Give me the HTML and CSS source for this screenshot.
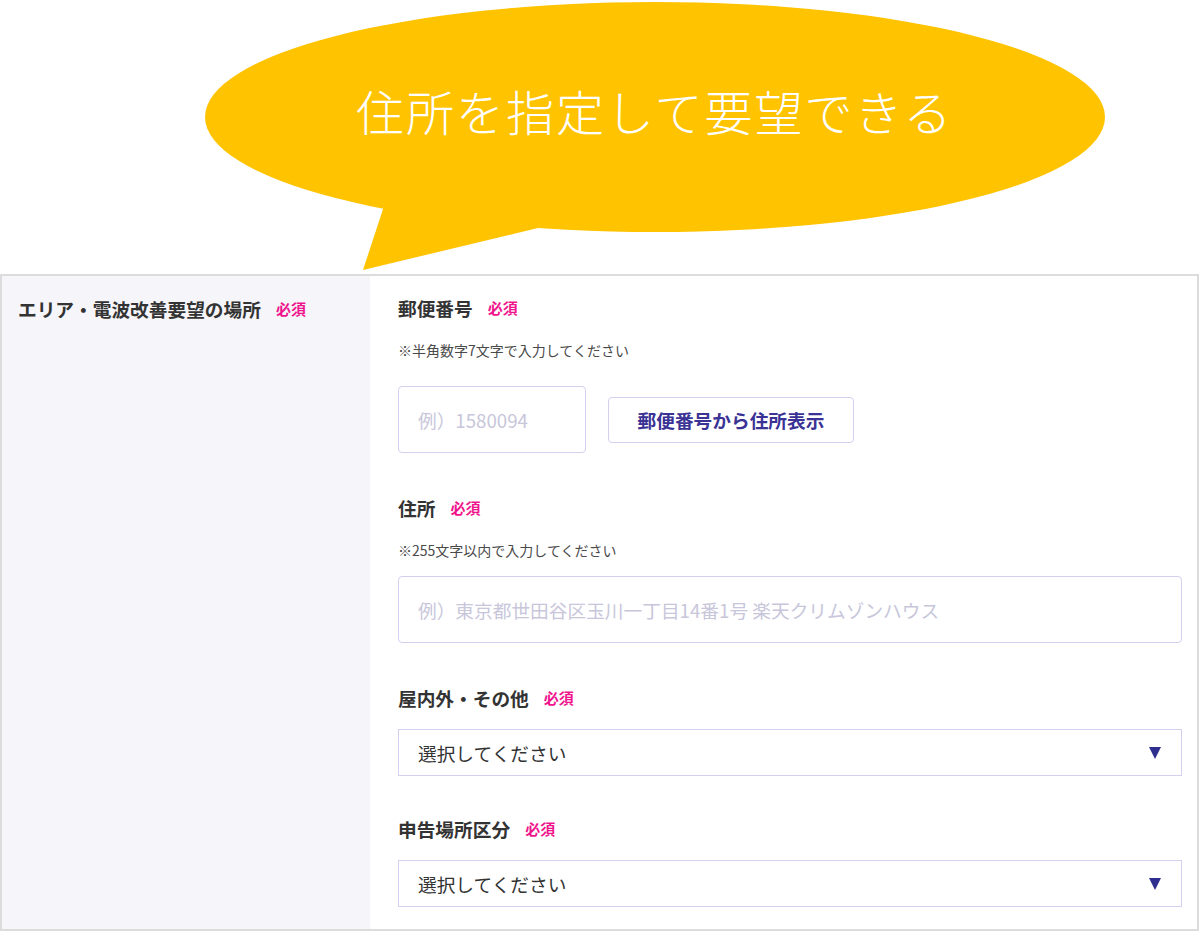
FILE: index.html
```html
<!DOCTYPE html>
<html lang="ja">
<head>
<meta charset="utf-8">
<title>エリア・電波改善要望の場所</title>
<link rel="stylesheet" href="styles.css">
</head>
<body>
<div class="callout">
  <svg class="bubble" width="1199" height="274" viewBox="0 0 1199 274">
    <ellipse cx="655" cy="117" rx="450" ry="115" fill="#FFC300"/>
    <polygon points="386,200 363,270 538,228 540,200" fill="#FFC300"/>
    <text x="356" y="131" class="bubble-text">住所を指定して要望できる</text>
  </svg>
</div>
<div class="form">
  <div class="side">
    <div class="side-label">エリア・電波改善要望の場所<span class="req">必須</span></div>
  </div>
  <div class="main">
    <div class="field">
      <div class="label">郵便番号<span class="req">必須</span></div>
      <div class="hint">※半角数字7文字で入力してください</div>
      <div class="zip-row">
        <div class="input zip">例）1580094</div>
        <div class="btn">郵便番号から住所表示</div>
      </div>
    </div>
    <div class="field">
      <div class="label">住所<span class="req">必須</span></div>
      <div class="hint">※255文字以内で入力してください</div>
      <div class="input addr">例）東京都世田谷区玉川一丁目14番1号 楽天クリムゾンハウス</div>
    </div>
    <div class="field">
      <div class="label">屋内外・その他<span class="req">必須</span></div>
      <div class="select"><span>選択してください</span><span class="arrow"></span></div>
    </div>
    <div class="field field-tight">
      <div class="label">申告場所区分<span class="req">必須</span></div>
      <div class="select"><span>選択してください</span><span class="arrow"></span></div>
    </div>
  </div>
</div>
</body>
</html>
```

FILE: styles.css
```css
html, body {
  margin: 0;
  padding: 0;
  background: #ffffff;
}

body {
  font-family: "Noto Sans CJK JP", "Noto Sans", sans-serif;
  color: #333333;
  width: 1199px;
}

.callout {
  height: 274px;
}

.bubble {
  display: block;
}

.bubble-text {
  font-family: "Noto Sans CJK JP", sans-serif;
  font-weight: 300;
  font-size: 48px;
  letter-spacing: 2px;
  fill: #ffffff;
}

.form {
  display: flex;
  border: 2px solid #dcdcdc;
  box-sizing: border-box;
  width: 1199px;
}

.side {
  width: 368px;
  flex: none;
  background: #f5f5fa;
  padding: 21px 16px;
  box-sizing: border-box;
}

.side-label {
  font-weight: 700;
  font-size: 18.7px;
  line-height: 24px;
  display: flex;
  align-items: center;
}

.req {
  color: #f0148c;
  font-weight: 700;
  font-size: 15px;
  margin-left: 15px;
}

.main {
  flex: 1;
  padding: 20px 15px 22px 28px;
}

.field + .field {
  margin-top: 43px;
}

.field + .field-tight {
  margin-top: 41px;
}

.label {
  font-weight: 700;
  font-size: 18.7px;
  line-height: 24px;
  display: flex;
  align-items: center;
}

.hint {
  font-size: 14px;
  line-height: 20px;
  margin-top: 20px;
  color: #4a4a4a;
}

.zip-row {
  display: flex;
  align-items: center;
  gap: 22px;
  margin-top: 26px;
}

.input {
  border: 1.5px solid #d3d0f0;
  border-radius: 4px;
  height: 67px;
  box-sizing: border-box;
  padding-left: 19px;
  display: flex;
  align-items: center;
  font-size: 18.7px;
  color: #c8c6da;
}

.zip {
  width: 188px;
}

.addr {
  margin-top: 16px;
}

.btn {
  width: 246px;
  height: 46px;
  box-sizing: border-box;
  border: 1.5px solid #d3d0f0;
  border-radius: 4px;
  background: #ffffff;
  color: #3a3294;
  font-weight: 700;
  font-size: 18.7px;
  display: flex;
  align-items: center;
  justify-content: center;
}

.select {
  margin-top: 19px;
  height: 47px;
  box-sizing: border-box;
  border: 1.5px solid #d3d0f0;
  display: flex;
  align-items: center;
  justify-content: space-between;
  padding: 0 20px 0 19px;
  font-size: 18.7px;
  color: #333333;
}

.arrow {
  width: 0;
  height: 0;
  border-left: 6.5px solid transparent;
  border-right: 6.5px solid transparent;
  border-top: 12px solid #2e2e8f;
}
```
